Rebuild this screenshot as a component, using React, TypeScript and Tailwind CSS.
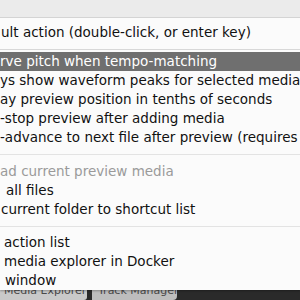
import React from 'react';

type Item = { label: string; pad: number; disabled?: boolean; active?: boolean };

const groupA: Item[] = [
    { label: 'rve pitch when tempo-matching', pad: 0, active: true },
    { label: 'ys show waveform peaks for selected media', pad: 0 },
    { label: 'ay preview position in tenths of seconds', pad: 0 },
    { label: '-stop preview after adding media', pad: 0 },
    { label: '-advance to next file after preview (requires', pad: 0 },
];

const groupB: Item[] = [
    { label: 'ad current preview media', pad: 0, disabled: true },
    { label: 'all files', pad: 6 },
    { label: 'current folder to shortcut list', pad: 1 },
];

const groupC: Item[] = [
    { label: 'action list', pad: 4 },
    { label: 'media explorer in Docker', pad: 4 },
    { label: 'window', pad: 5 },
];

function MenuRow({ item }: { item: Item }) {
    return (
        <div
            className={
                'h-[19px] flex items-center whitespace-nowrap overflow-hidden ' +
                (item.active ? 'bg-[#6f6f6f] text-white' : item.disabled ? 'text-[#9a9a9a]' : 'text-[#111]')
            }
            style={{ paddingLeft: item.pad }}
        >
            {item.label}
        </div>
    );
}

export default function App() {
    return (
        <div
            className="w-[300px] h-[300px] overflow-hidden flex flex-col bg-[#2a2a2a] text-[13.5px]"
            style={{ fontFamily: '"DejaVu Sans", Verdana, sans-serif' }}
        >
            <div className="bg-[#fbfbfb] flex flex-col h-[290px] shrink-0 shadow-[0_1px_2px_rgba(0,0,0,0.3)] relative z-10">
                {/* window header strip */}
                <div className="h-[18px] bg-[#ebebeb] border-b border-[#d4d4d4]" />
                <div className="h-[26px] flex items-end pb-[2px] whitespace-nowrap text-[#111] pl-[1px]">
                    ult action (double-click, or enter key)
                </div>
                <div className="mt-[5px] h-px bg-[#d8d8d8]" />
                <div className="h-[2px]" />

                {groupA.map(i => <MenuRow key={i.label} item={i} />)}
                <div className="h-[15px] flex items-center">
                    <div className="h-px w-full bg-[#e3e3e3]" />
                </div>
                {groupB.map(i => <MenuRow key={i.label} item={i} />)}
                <div className="h-[14px] flex items-center">
                    <div className="h-px w-full bg-[#e3e3e3]" />
                </div>
                {groupC.map(i => <MenuRow key={i.label} item={i} />)}
            </div>

            {/* dock tabs peeking from underneath the menu */}
            <div className="flex h-[20px] -mt-[10px] gap-[5px] text-[11px] text-[#4a4a4a]">
                <div className="w-[87px] bg-[#c9c9c9] rounded-br-[3px] pl-[4px] pt-[3px] whitespace-nowrap">
                    Media Explorer
                </div>
                <div className="w-[85px] bg-[#bdbdbd] rounded-br-[4px] pl-[6px] pt-[3px] whitespace-nowrap">
                    Track Manager
                </div>
            </div>
        </div>
    );
}
